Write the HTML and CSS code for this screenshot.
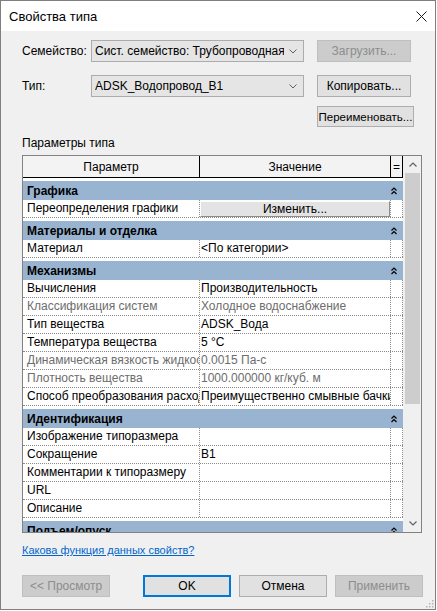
FILE: index.html
```html
<!DOCTYPE html>
<html lang="ru">
<head>
<meta charset="utf-8">
<title>Свойства типа</title>
<link rel="stylesheet" href="styles.css">
</head>
<body>
<div class="dialog">
  <div class="titlebar">
    <span class="title">Свойства типа</span>
    <svg class="close" width="11" height="11" viewBox="0 0 11 11"><path d="M0.5 0.5 L10.5 10.5 M10.5 0.5 L0.5 10.5" stroke="#1a1a1a" stroke-width="1" fill="none"/></svg>
  </div>
  <div class="body">
    <div class="frow">
      <span class="flabel">Семейство:</span>
      <div class="select"><span class="select-text">Сист. семейство: Трубопроводная система</span><svg class="chev" width="8" height="5" viewBox="0 0 8 5"><polyline points="0.5,0.5 4,4 7.5,0.5" stroke="#606060" fill="none"/></svg></div>
      <button class="btn disabled" disabled>Загрузить...</button>
    </div>
    <div class="frow frow2">
      <span class="flabel">Тип:</span>
      <div class="select"><span class="select-text">ADSK_Водопровод_B1</span><svg class="chev" width="8" height="5" viewBox="0 0 8 5"><polyline points="0.5,0.5 4,4 7.5,0.5" stroke="#606060" fill="none"/></svg></div>
      <button class="btn">Копировать...</button>
    </div>
    <div class="frow frow3">
      <button class="btn btn-rename">Переименовать...</button>
    </div>
    <div class="section-label">Параметры типа</div>
    <div class="table">
      <div class="rows">
        <div class="hdr">
          <div class="h1">Параметр</div>
          <div class="h2">Значение</div>
          <div class="h3">=</div>
        </div>

        <div class="grp"><div class="band"><span class="gname">Графика</span><span class="gico"><svg width="6" height="8" viewBox="0 0 6 8"><path d="M0.5 3.5 L3 1 L5.5 3.5 M0.5 7 L3 4.5 L5.5 7" stroke="#000" stroke-width="1.2" fill="none"/></svg></span></div></div>
        <div class="row"><div class="c1">Переопределения графики</div><div class="c2 cbtn"><span class="inbtn">Изменить...</span></div><div class="c3"></div></div>

        <div class="grp"><div class="band"><span class="gname">Материалы и отделка</span><span class="gico"><svg width="6" height="8" viewBox="0 0 6 8"><path d="M0.5 3.5 L3 1 L5.5 3.5 M0.5 7 L3 4.5 L5.5 7" stroke="#000" stroke-width="1.2" fill="none"/></svg></span></div></div>
        <div class="row"><div class="c1">Материал</div><div class="c2">&lt;По категории&gt;</div><div class="c3"></div></div>

        <div class="grp"><div class="band"><span class="gname">Механизмы</span><span class="gico"><svg width="6" height="8" viewBox="0 0 6 8"><path d="M0.5 3.5 L3 1 L5.5 3.5 M0.5 7 L3 4.5 L5.5 7" stroke="#000" stroke-width="1.2" fill="none"/></svg></span></div></div>
        <div class="row"><div class="c1">Вычисления</div><div class="c2">Производительность</div><div class="c3"></div></div>
        <div class="row dim"><div class="c1">Классификация систем</div><div class="c2">Холодное водоснабжение</div><div class="c3"></div></div>
        <div class="row"><div class="c1">Тип вещества</div><div class="c2">ADSK_Вода</div><div class="c3"></div></div>
        <div class="row"><div class="c1">Температура вещества</div><div class="c2">5 °C</div><div class="c3"></div></div>
        <div class="row dim"><div class="c1">Динамическая вязкость жидкости</div><div class="c2">0.0015 Па-с</div><div class="c3"></div></div>
        <div class="row dim"><div class="c1">Плотность вещества</div><div class="c2">1000.000000 кг/куб. м</div><div class="c3"></div></div>
        <div class="row"><div class="c1">Способ преобразования расхода</div><div class="c2">Преимущественно смывные бачки</div><div class="c3"></div></div>

        <div class="grp"><div class="band"><span class="gname">Идентификация</span><span class="gico"><svg width="6" height="8" viewBox="0 0 6 8"><path d="M0.5 3.5 L3 1 L5.5 3.5 M0.5 7 L3 4.5 L5.5 7" stroke="#000" stroke-width="1.2" fill="none"/></svg></span></div></div>
        <div class="row"><div class="c1">Изображение типоразмера</div><div class="c2"></div><div class="c3"></div></div>
        <div class="row"><div class="c1">Сокращение</div><div class="c2">B1</div><div class="c3"></div></div>
        <div class="row"><div class="c1">Комментарии к типоразмеру</div><div class="c2"></div><div class="c3"></div></div>
        <div class="row"><div class="c1">URL</div><div class="c2"></div><div class="c3"></div></div>
        <div class="row"><div class="c1">Описание</div><div class="c2"></div><div class="c3"></div></div>

        <div class="grp"><div class="band"><span class="gname">Подъем/опуск</span><span class="gico"><svg width="6" height="8" viewBox="0 0 6 8"><path d="M0.5 3.5 L3 1 L5.5 3.5 M0.5 7 L3 4.5 L5.5 7" stroke="#000" stroke-width="1.2" fill="none"/></svg></span></div></div>
      </div>
      <div class="sb">
        <div class="sb-arrow"><svg width="8" height="5" viewBox="0 0 8 5"><polyline points="0.5,4.5 4,1 7.5,4.5" stroke="#606060" stroke-width="1.2" fill="none"/></svg></div>
        <div class="sb-track"><div class="sb-thumb"></div></div>
        <div class="sb-arrow"><svg width="8" height="5" viewBox="0 0 8 5"><polyline points="0.5,0.5 4,4 7.5,0.5" stroke="#606060" stroke-width="1.2" fill="none"/></svg></div>
      </div>
    </div>
    <a class="help" href="#">Какова функция данных свойств?</a>
    <div class="actions">
      <button class="btn abtn disabled" disabled>&lt;&lt; Просмотр</button>
      <button class="btn abtn ok">OK</button>
      <button class="btn abtn">Отмена</button>
      <button class="btn abtn disabled" disabled>Применить</button>
    </div>
  </div>
  <svg class="grip" width="9" height="9" viewBox="0 0 9 9">
    <rect x="7" y="1" width="1.5" height="1.5" fill="#b4b4b4"/>
    <rect x="4" y="4" width="1.5" height="1.5" fill="#b4b4b4"/>
    <rect x="7" y="4" width="1.5" height="1.5" fill="#b4b4b4"/>
    <rect x="1" y="7" width="1.5" height="1.5" fill="#b4b4b4"/>
    <rect x="4" y="7" width="1.5" height="1.5" fill="#b4b4b4"/>
    <rect x="7" y="7" width="1.5" height="1.5" fill="#b4b4b4"/>
  </svg>
</div>
</body>
</html>
```

FILE: styles.css
```css
html, body {
  margin: 0;
  padding: 0;
  background: #ffffff;
}
body {
  width: 437px;
  height: 611px;
  font-family: "Liberation Sans", Arial, sans-serif;
  font-size: 12px;
  color: #000;
}
.dialog {
  position: relative;
  width: 436px;
  height: 610px;
  box-sizing: border-box;
  border: 1px solid #7f7f7f;
  background: #f0f0f0;
  display: flex;
  flex-direction: column;
}
.titlebar {
  flex: none;
  height: 30px;
  background: #fff;
  display: flex;
  align-items: center;
  padding-left: 8px;
}
.title {
  font-size: 13px;
}
.close {
  margin-left: auto;
  margin-right: 8px;
}
.body {
  padding: 9px 0 0 21px;
}
.frow {
  display: flex;
  align-items: center;
  height: 22px;
}
.frow2 {
  margin-top: 13px;
}
.frow3 {
  margin-top: 9px;
  height: 21px;
}
.flabel {
  width: 69px;
  flex: none;
}
.select {
  flex: none;
  width: 213px;
  height: 22px;
  box-sizing: border-box;
  border: 1px solid #acacac;
  background: #e5e5e5;
  display: flex;
  align-items: center;
  padding: 0 6px 0 3px;
}
.select-text {
  flex: 1;
  overflow: hidden;
  white-space: nowrap;
}
.chev {
  flex: none;
  margin-left: 5px;
}
.btn {
  flex: none;
  box-sizing: border-box;
  height: 22px;
  width: 94px;
  margin: 0 0 0 13px;
  padding: 0;
  border: 1px solid #adadad;
  background: #e1e1e1;
  font: inherit;
  color: #000;
}
.btn.disabled {
  background: #cccccc;
  border-color: #bfbfbf;
  color: #8d8d8d;
}
.btn-rename {
  margin-left: 295px;
  width: 97px;
  height: 21px;
  font-size: 11.5px;
}
.section-label {
  margin-top: 8px;
  line-height: 16px;
  height: 16px;
}
.table {
  margin-top: 4px;
  width: 400px;
  height: 378px;
  box-sizing: border-box;
  border: 1px solid #828282;
  background: #fff;
  display: flex;
}
.rows {
  width: 380px;
  flex: none;
  overflow: hidden;
}
.hdr {
  display: flex;
  height: 22px;
  box-sizing: border-box;
  border-bottom: 1px solid #000;
  background: #f3f3f3;
}
.hdr > div {
  box-sizing: border-box;
  border-right: 1px solid #000;
  display: flex;
  align-items: center;
  justify-content: center;
}
.h1 { width: 177px; }
.h2 { width: 191px; }
.h3 { width: 12px; }
.grp {
  padding-top: 3px;
  background: #fff;
}
.band {
  height: 19px;
  background: #99b4d1;
  display: flex;
  align-items: center;
  font-weight: bold;
}
.gname {
  width: 368px;
  box-sizing: border-box;
  padding-left: 4px;
  overflow: hidden;
  white-space: nowrap;
}
.gico {
  width: 12px;
  display: flex;
  align-items: center;
  padding-left: 1px;
}
.row {
  display: flex;
  height: 18px;
  box-sizing: border-box;
  border-bottom: 1px dotted #8a8a8a;
  line-height: 17px;
}
.row > div {
  box-sizing: border-box;
  border-right: 1px dotted #8a8a8a;
  overflow: hidden;
  white-space: nowrap;
}
.c1 { width: 177px; padding-left: 4px; }
.c2 { width: 191px; padding-left: 1px; }
.c3 { width: 12px; }
.row.dim { color: #6d6d6d; }
.c2.cbtn {
  padding: 1px 0 0 0;
}
.inbtn {
  display: flex;
  align-items: center;
  justify-content: center;
  height: 16px;
  box-sizing: border-box;
  background: #e3e3e3;
  border-top: 1px solid #fff;
  border-left: 1px solid #fff;
  border-right: 1px solid #8c8c8c;
  border-bottom: 1px solid #8c8c8c;
  line-height: 14px;
}
.sb {
  width: 18px;
  flex: none;
  box-sizing: border-box;
  padding-left: 1px;
  background: #f0f0f0;
  display: flex;
  flex-direction: column;
}
.sb-arrow {
  height: 17px;
  flex: none;
  display: flex;
  align-items: center;
  justify-content: center;
}
.sb-track {
  flex: 1;
}
.sb-thumb {
  margin-left: 1px;
  width: 15px;
  height: 231px;
  background: #cdcdcd;
}
.help {
  display: block;
  width: max-content;
  margin-top: 9px;
  line-height: 16px;
  font-size: 11px;
  color: #0066cc;
  text-decoration: underline;
}
.actions {
  display: flex;
  margin-top: 17px;
}
.abtn {
  width: 88px;
  margin-left: 8px;
}
.abtn:first-child {
  margin-left: 0;
}
.abtn.ok {
  margin-left: 33px;
  border: 2px solid #0078d7;
}
.grip {
  position: absolute;
  right: 1px;
  bottom: 1px;
}
```
